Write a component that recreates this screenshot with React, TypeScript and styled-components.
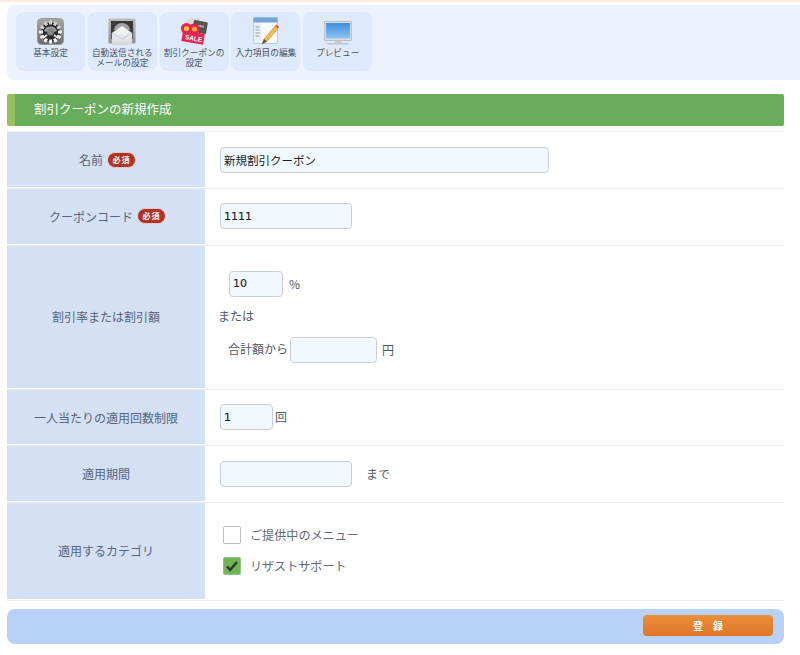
import React, { FC } from "react";
import styled, { createGlobalStyle } from "styled-components";

const FONT = `"Noto Sans CJK JP", "Noto Sans", sans-serif`;

const GlobalStyle = createGlobalStyle`
  html, body {
    margin: 0;
    padding: 0;
    background: #fff;
    font-family: ${FONT};
  }
`;

const GEAR_TEETH = [0, 30, 60, 90, 120, 150, 180, 210, 240, 270, 300, 330];

const GearIcon = () => (
  <svg width="27" height="27" viewBox="0 0 27 27">
    <defs>
      <linearGradient id="gearBg" x1="0" y1="0" x2="0" y2="1">
        <stop offset="0" stopColor="#a6a6a6" />
        <stop offset="1" stopColor="#6a6a6a" />
      </linearGradient>
    </defs>
    <rect x="0.5" y="0.5" width="26" height="26" rx="4" fill="url(#gearBg)" stroke="#9a9a9a" />
    <circle cx="13.5" cy="14" r="9.5" fill="#242424" />
    {GEAR_TEETH.map((deg) => (
      <rect
        key={deg}
        x="12"
        y="2.5"
        width="3"
        height="4"
        fill={deg > 60 && deg < 300 ? "#f0f0f0" : "#cfcfcf"}
        transform={`rotate(${deg} 13.5 14)`}
      />
    ))}
    <circle cx="13.5" cy="14" r="7" fill="#2e2e2e" />
    <path d="M7 13a7 7 0 0 1 13 0l-3 1a4 4 0 0 0-7 0z" fill="#9b9b9b" />
    <circle cx="13.5" cy="14" r="3.4" fill="#858585" />
    <path d="M6 20l4-3M21 20l-4-3" stroke="#e6e6e6" strokeWidth="1.6" />
  </svg>
);

const MailIcon = () => (
  <svg width="28" height="27" viewBox="0 0 28 27">
    <defs>
      <linearGradient id="mailFrame" x1="0" y1="0" x2="0" y2="1">
        <stop offset="0" stopColor="#bdbdbd" />
        <stop offset="1" stopColor="#8f8f8f" />
      </linearGradient>
      <linearGradient id="mailBody" x1="0" y1="0" x2="0" y2="1">
        <stop offset="0" stopColor="#fbfbfb" />
        <stop offset="1" stopColor="#d4d8dc" />
      </linearGradient>
    </defs>
    <rect x="0.5" y="0.5" width="27" height="25" rx="1" fill="url(#mailFrame)" />
    <rect x="3" y="3" width="22" height="18" fill="#3a3a3a" />
    <path d="M6 12a8 7 0 0 1 16 0z" fill="#a2a2a2" />
    <path d="M4 15 14 8l10 7v10a2 2 0 0 1-2 2H6a2 2 0 0 1-2-2z" fill="url(#mailBody)" stroke="#c9cdd1" strokeWidth="0.5" />
    <path d="M4 15l10 6 10-6" fill="none" stroke="#bfc4c9" strokeWidth="0.8" />
  </svg>
);

const CouponIcon = () => (
  <svg width="28" height="27" viewBox="0 0 28 27">
    <rect x="7" y="0.5" width="13" height="11" rx="2" fill="#dcdad2" transform="rotate(-8 13 6)" />
    <rect x="13" y="3" width="14" height="12" rx="1" fill="#55544e" transform="rotate(10 20 9)" />
    <rect x="18" y="7" width="6" height="2" fill="#a9a89f" transform="rotate(10 20 9)" />
    <circle cx="6.5" cy="10.5" r="5.5" fill="#e8204c" />
    <circle cx="14" cy="11" r="5.5" fill="#e8204c" />
    <rect x="2" y="14" width="22" height="11" fill="#e8264f" transform="rotate(10 13 20)" />
    <circle cx="6.5" cy="10.5" r="2.6" fill="#f8c23f" />
    <circle cx="14.5" cy="11" r="2.6" fill="#f4a63a" />
    <SaleText x="5" y="22.5" transform="rotate(10 13 20)">
      SALE
    </SaleText>
  </svg>
);

const NoteIcon = () => (
  <svg width="26" height="28" viewBox="0 0 26 28">
    <rect x="0.5" y="0.5" width="24" height="26" rx="1.5" fill="#f7f9fc" stroke="#b4cdec" />
    <rect x="0.5" y="0.5" width="24" height="5" fill="#76a3d9" />
    <rect x="1" y="6" width="7" height="20" fill="#e8eff8" />
    <path d="M2.5 10h4M2.5 13h4M2.5 16h4M2.5 19h4" stroke="#8f9aa8" strokeWidth="1" />
    <path d="M9 27l2-5L22 9l3 2.5L14 24.5z" fill="#eebc4d" stroke="#b98c2e" strokeWidth="0.5" />
    <path d="M22 9l1.4-1.6 2.6 2.4-1 1.7z" fill="#e2574c" />
    <path d="M9 27l2-5 3 2.5z" fill="#5c5347" />
  </svg>
);

const MonitorIcon = () => (
  <svg width="28" height="24" viewBox="0 0 28 24">
    <defs>
      <linearGradient id="screen" x1="0" y1="0" x2="0" y2="1">
        <stop offset="0" stopColor="#3f8ede" />
        <stop offset="1" stopColor="#8cc4f2" />
      </linearGradient>
    </defs>
    <rect x="0.5" y="0.5" width="27" height="19" rx="0.5" fill="#dcdfe2" stroke="#b9bdc2" />
    <rect x="2" y="2" width="24" height="15.5" fill="url(#screen)" />
    <rect x="11" y="19.5" width="6" height="2.5" fill="#c7cacd" />
    <rect x="3" y="22" width="22" height="1.4" rx="0.7" fill="#c4c7ca" />
  </svg>
);

const NAV_ITEMS = [
  { icon: <GearIcon />, lines: ["基本設定"] },
  { icon: <MailIcon />, lines: ["自動送信される", "メールの設定"] },
  { icon: <CouponIcon />, lines: ["割引クーポンの", "設定"] },
  { icon: <NoteIcon />, lines: ["入力項目の編集"] },
  { icon: <MonitorIcon />, lines: ["プレビュー"] },
];

interface RowProps {
  label: string;
  required?: boolean;
  height: number;
  children: React.ReactNode;
}

const FormRow: FC<RowProps> = ({ label, required, height, children }) => (
  <Row $height={height}>
    <Label>
      {label}
      {required && <Badge>必須</Badge>}
    </Label>
    <Value>{children}</Value>
  </Row>
);

const App: FC = () => (
  <Page>
    <GlobalStyle />
    <TopStrip />
    <Toolbar>
      {NAV_ITEMS.map((item) => (
        <NavButton key={item.lines[0]}>
          <NavIcon>{item.icon}</NavIcon>
          {item.lines.map((line) => (
            <NavLine key={line}>{line}</NavLine>
          ))}
        </NavButton>
      ))}
    </Toolbar>

    <Content>
      <Heading>割引クーポンの新規作成</Heading>

      <Form>
        <FormRow label="名前" required height={57.2}>
          <TextInput $width={329} defaultValue="新規割引クーポン" />
        </FormRow>
        <FormRow label="クーポンコード" required height={56.4}>
          <TextInput $width={132} $latin defaultValue="1111" />
        </FormRow>
        <FormRow label="割引率または割引額" height={144.8}>
          <Stack>
            <Line $indent={9}>
              <TextInput $width={54} $latin defaultValue="10" />
              <Unit $gap={6}>%</Unit>
            </Line>
            <Line>
              <Note>または</Note>
            </Line>
            <Line $indent={10}>
              <Note>合計額から</Note>
              <TextInput $width={87} />
              <Unit $gap={5}>円</Unit>
            </Line>
          </Stack>
        </FormRow>
        <FormRow label="一人当たりの適用回数制限" height={55.8}>
          <TextInput $width={53} $latin defaultValue="1" />
          <Unit $gap={2}>回</Unit>
        </FormRow>
        <FormRow label="適用期間" height={56.8}>
          <TextInput $width={132} />
          <Unit $gap={14}>まで</Unit>
        </FormRow>
        <FormRow label="適用するカテゴリ" height={98}>
          <Checks>
            <CheckRow>
              <CheckBox />
              <CheckText>ご提供中のメニュー</CheckText>
            </CheckRow>
            <CheckRow>
              <CheckBox $checked>
                <svg width="14" height="12" viewBox="0 0 14 12">
                  <path d="M2 6.5l3.2 3.4L12 2" fill="none" stroke="#333" strokeWidth="2.4" />
                </svg>
              </CheckBox>
              <CheckText>リザストサポート</CheckText>
            </CheckRow>
          </Checks>
        </FormRow>
      </Form>

      <Footer>
        <SubmitButton>登　録</SubmitButton>
      </Footer>
    </Content>
  </Page>
);

const Page = styled.div`
  width: 800px;
  height: 655px;
  overflow: hidden;
  background: #fff;
`;

const TopStrip = styled.div`
  height: 2px;
  background: #fdeadd;
`;

const Toolbar = styled.nav`
  display: flex;
  gap: 2.8px;
  height: 75px;
  box-sizing: border-box;
  margin: 3px 0 0 7px;
  padding: 7px 0 0 9px;
  background: #edf3fe;
  border-radius: 8px 0 0 8px;
`;

const NavButton = styled.a`
  display: block;
  width: 69px;
  height: 59px;
  background: #dee9fc;
  border-radius: 8px;
  text-align: center;
`;

const NavIcon = styled.div`
  height: 28px;
  padding-top: 5px;
  margin-bottom: 3px;
  display: flex;
  justify-content: center;
  align-items: flex-end;
`;

const NavLine = styled.div`
  font-size: 8.7px;
  line-height: 10px;
  color: #4a5566;
  white-space: nowrap;
`;

const SaleText = styled.text`
  font-family: "Liberation Sans", sans-serif;
  font-size: 6.5px;
  font-weight: 700;
  fill: #fff;
`;

const Content = styled.main`
  width: 777px;
  margin: 14px 0 0 7px;
`;

const Heading = styled.h1`
  height: 32px;
  margin: 0 0 5px;
  padding-left: 19px;
  box-sizing: border-box;
  background: #68ad5b;
  border-left: 8px solid #97c05c;
  border-radius: 2px;
  color: #fff;
  font-size: 12.5px;
  font-weight: 400;
  line-height: 30px;
`;

const Form = styled.div`
  border-top: 1px solid #f1f1f1;
`;

const Row = styled.div<{ $height: number }>`
  display: flex;
  height: ${(p) => p.$height}px;
  box-sizing: border-box;
  padding-bottom: 1px;
  border-bottom: 1px solid #eeeeee;
`;

const Label = styled.div`
  flex: none;
  width: 198px;
  display: flex;
  align-items: center;
  justify-content: center;
  background: #d4e0f3;
  color: #55657f;
  font-size: 12px;
`;

const Badge = styled.span`
  margin: 0 -3px 0 4px;
  flex: none;
  width: 29px;
  height: 16px;
  box-sizing: border-box;
  border: 1px solid #e4c9c4;
  border-radius: 8px;
  background: #b23227;
  color: #fff;
  font-size: 8px;
  font-weight: 700;
  letter-spacing: 1px;
  line-height: 14px;
  text-align: center;
`;

const Value = styled.div`
  flex: 1;
  display: flex;
  align-items: center;
  padding-left: 13px;
  color: #4f5966;
  font-size: 12px;
`;

const TextInput = styled.input<{ $width: number; $latin?: boolean }>`
  width: ${(p) => p.$width}px;
  height: 26px;
  box-sizing: border-box;
  margin: 0 0 0 2px;
  padding: 0 3px;
  border: 1px solid #c8ced6;
  border-radius: 4px;
  background: #f1f9ff;
  color: #1c1c1c;
  font-family: ${(p) => (p.$latin ? `"DejaVu Sans", sans-serif` : FONT)};
  font-size: ${(p) => (p.$latin ? "11px" : "11.5px")};
  -webkit-text-stroke: ${(p) => (p.$latin ? "0.15px" : "0")};
  outline: none;
`;

const Unit = styled.span<{ $gap: number }>`
  margin-left: ${(p) => p.$gap}px;
  padding-bottom: 1px;
`;

const Stack = styled.div`
  display: flex;
  flex-direction: column;
  gap: 12px;
`;

const Line = styled.div<{ $indent?: number }>`
  display: flex;
  align-items: center;
  padding-left: ${(p) => p.$indent ?? 0}px;
`;

const Note = styled.span`
  line-height: 14px;
  padding-bottom: 2px;
`;

const Checks = styled.div`
  display: flex;
  flex-direction: column;
  gap: 13px;
  padding-left: 5px;
`;

const CheckRow = styled.label`
  display: flex;
  align-items: center;
  gap: 9px;
`;

const CheckBox = styled.span<{ $checked?: boolean }>`
  width: 18px;
  height: 18px;
  box-sizing: border-box;
  display: flex;
  align-items: center;
  justify-content: center;
  border: 1px solid ${(p) => (p.$checked ? "#8fc47d" : "#bdbdbd")};
  border-radius: 2px;
  background: ${(p) => (p.$checked ? "#70b655" : "#fff")};
`;

const CheckText = styled.span`
  color: #5f6977;
  font-size: 12.1px;
  line-height: 16px;
`;

const Footer = styled.div`
  display: flex;
  justify-content: flex-end;
  height: 35px;
  box-sizing: border-box;
  margin-top: 8px;
  padding: 6px 11px 0 0;
  background: #b8d1f7;
  border-radius: 8px;
`;

const SubmitButton = styled.button`
  width: 130px;
  height: 21px;
  padding: 0;
  border: 0;
  border-radius: 4px;
  background: linear-gradient(#ea8f38, #e0752c);
  color: #fff;
  font-family: ${FONT};
  font-size: 10px;
  font-weight: 700;
  line-height: 21px;
`;

export default App;
